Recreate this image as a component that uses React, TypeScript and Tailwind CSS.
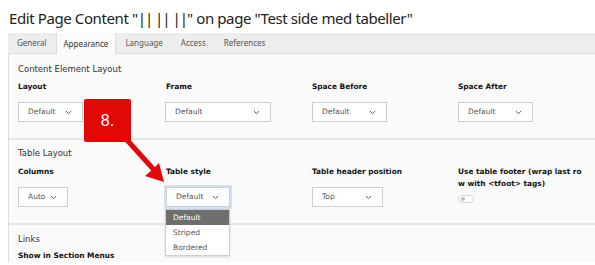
import React from "react";

const verd = "font-['DejaVu_Sans',Verdana,sans-serif]";

function Chevron() {
  return (
    <svg width="7" height="5" viewBox="0 0 7 5" className="shrink-0">
      <path d="M0.8 1 L3.5 3.6 L6.2 1" fill="none" stroke="#555" strokeWidth="1" />
    </svg>
  );
}

function Select({ value, className }: { value: string; className: string }) {
  return (
    <div
      className={`flex h-[20px] items-center justify-between border border-[#cfcfcf] bg-white pl-[9px] pr-[10px] text-[7.5px] text-[#555] ${className}`}
    >
      <span>{value}</span>
      <Chevron />
    </div>
  );
}

function Label({ children }: { children: React.ReactNode }) {
  return <div className="text-[7.4px] font-bold leading-[12px] text-[#111]">{children}</div>;
}

const tabs = ["General", "Appearance", "Language", "Access", "References"];

export default function App() {
  return (
    <div className={`relative h-[265px] w-[595px] overflow-hidden bg-white ${verd}`}>
      <h1 className="pl-[9px] pt-[7px] font-['Noto_Sans',sans-serif] text-[15px] leading-[22px] tracking-[-0.4px] text-[#222]">
        Edit Page Content "<span className="tracking-[-1px]">|| || ||</span>" on page "Test side med tabeller"
      </h1>

      <div className="ml-[8px] mt-[4px]">
        {/* tab bar */}
        <div className="flex h-[21px] border-b border-[#dcdcdc] bg-[#ededed] font-['Noto_Sans',sans-serif] text-[8px] text-[#555]">
          {tabs.map((t) => (
            <div
              key={t}
              className={
                t === "Appearance"
                  ? "-mb-px flex items-center border-x border-[#dcdcdc] bg-[#fafafa] px-[7px] text-[#333]"
                  : "flex items-center px-[9px]"
              }
            >
              {t}
            </div>
          ))}
        </div>

        <div className="border-l border-[#dcdcdc] bg-[#fafafa]">
          {/* Content Element Layout */}
          <div className="px-[9px] pb-[16px] pt-[9px]">
            <div className="text-[8.5px] leading-[12px] text-[#333]">Content Element Layout</div>
            <div className="mt-[6px] grid grid-cols-[148px_146px_146px_1fr]">
              <div>
                <Label>Layout</Label>
                <Select value="Default" className="mt-[9px] w-[65px]" />
              </div>
              <div>
                <Label>Frame</Label>
                <Select value="Default" className="mt-[9px] -ml-px w-[106px]" />
              </div>
              <div>
                <Label>Space Before</Label>
                <Select value="Default" className="mt-[9px] w-[75px]" />
              </div>
              <div>
                <Label>Space After</Label>
                <Select value="Default" className="mt-[9px] w-[75px]" />
              </div>
            </div>
          </div>

          <div className="h-[2px] bg-[#e6e6e6]" />

          {/* Table Layout */}
          <div className="px-[9px] pb-[16px] pt-[7px]">
            <div className="text-[8.5px] leading-[12px] text-[#333]">Table Layout</div>
            <div className="mt-[7px] grid grid-cols-[148px_146px_146px_1fr]">
              <div>
                <Label>Columns</Label>
                <Select value="Auto" className="mt-[9px] w-[50px]" />
              </div>
              <div>
                <Label>Table style</Label>
                <Select
                  value="Default"
                  className="mt-[9px] w-[64px] border-[#8dbbe6] shadow-[0_0_0_2px_#cfe2f5]"
                />
              </div>
              <div>
                <Label>Table header position</Label>
                <Select value="Top" className="mt-[9px] w-[71px]" />
              </div>
              <div>
                <Label>
                  Use table footer (wrap last ro
                  <br />w with &lt;tfoot&gt; tags)
                </Label>
                <div className="mt-[5px] flex h-[8px] w-[16px] items-center rounded-full border border-[#d6d6d6] bg-white pl-[2px]">
                  <div className="h-[4px] w-[4px] rounded-full bg-[#bdbdbd]" />
                </div>
              </div>
            </div>
          </div>

          <div className="h-[2px] bg-[#e6e6e6]" />

          {/* Links */}
          <div className="px-[9px] pt-[8px]">
            <div className="text-[8.5px] leading-[12px] text-[#333]">Links</div>
            <div className="mt-[5px]">
              <Label>Show in Section Menus</Label>
            </div>
          </div>
        </div>
      </div>

      {/* open dropdown list */}
      <div className="absolute left-[165px] top-[209px] w-[65px] border border-[#cfcfcf] bg-white text-[7.5px] text-[#555] shadow-[0_1px_2px_rgba(0,0,0,0.15)]">
        <div className="flex h-[15px] items-center bg-[#6e6e6e] pl-[7px] text-white">Default</div>
        <div className="flex h-[15px] items-center pl-[7px]">Striped</div>
        <div className="flex h-[15px] items-center pl-[7px]">Bordered</div>
      </div>

      {/* callout */}
      <div className="absolute left-[84px] top-[99px] flex h-[43px] w-[47px] items-center justify-center rounded-[2px] bg-[#e30808] font-['Liberation_Sans',Arial,sans-serif] text-[16px] text-white">
        8.
      </div>
      <svg className="absolute left-0 top-0" width="595" height="265" viewBox="0 0 595 265">
        <line x1="127" y1="140" x2="155" y2="171" stroke="#e30808" strokeWidth="5" />
        <polygon points="164,182 145,176 152,170 159,163" fill="#e30808" />
      </svg>
    </div>
  );
}
